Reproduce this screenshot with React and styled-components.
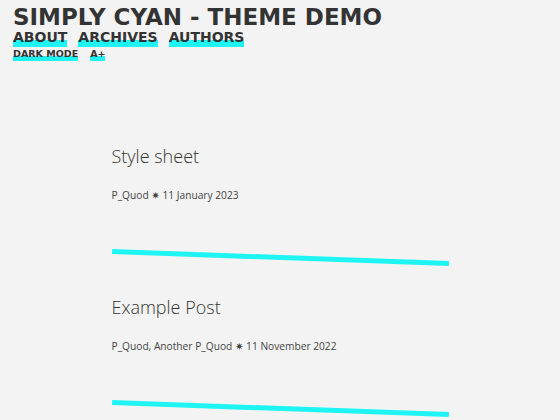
import React from 'react'
import styled, { createGlobalStyle } from 'styled-components'

const GlobalStyle = createGlobalStyle`
  html, body {
    margin: 0;
    padding: 0;
    background: #f3f3f3;
    color: #333333;
    font-family: "DejaVu Sans", "Noto Sans", sans-serif;
  }
`

const cyan = '#1ef4f4'

const Header = styled.header`
  padding: 6px 13px 0;
  display: flex;
  flex-direction: column;
  align-items: flex-start;
`

const Title = styled.h1`
  margin: 0;
  font-size: 23px;
  line-height: 23px;
  font-weight: 700;
  color: #333;
`

const Nav = styled.nav`
  display: flex;
  align-items: flex-start;
  gap: ${p => p.$gap}px;
  margin-top: ${p => p.$top}px;
`

const NavLink = styled.a`
  display: inline-block;
  font-size: ${p => p.$size}px;
  line-height: ${p => p.$line}px;
  padding-bottom: 2px;
  font-weight: 700;
  color: #333;
  text-decoration: none;
  background: linear-gradient(to bottom, transparent 60%, ${cyan} 60%);
  cursor: pointer;
`

const Main = styled.main`
  width: 337px;
  margin: 0 auto;
  padding-top: 84px;
  font-family: "Open Sans", "DejaVu Sans", sans-serif;
`

const Post = styled.article`
  display: flex;
  flex-direction: column;
`

const PostTitle = styled.h2`
  margin: 0;
  font-size: 18px;
  line-height: 22px;
  font-weight: 300;
  color: #333;
`

const Meta = styled.p`
  margin: 21px 0 0;
  font-size: 10.2px;
  line-height: 14px;
  color: #444;
`

const Rule = styled.hr`
  border: none;
  height: 5px;
  background: ${cyan};
  margin: 53px 0 36px;
  transform: rotate(2deg);
`

const posts = [
  { title: 'Style sheet', authors: 'P_Quod', date: '11 January 2023' },
  { title: 'Example Post', authors: 'P_Quod, Another P_Quod', date: '11 November 2022' },
]

export default function App() {
  return (
    <>
      <GlobalStyle />
      <Header>
        <Title>SIMPLY CYAN - THEME DEMO</Title>
        <Nav $gap={11} $top={0}>
          <NavLink $size={14} $line={16}>ABOUT</NavLink>
          <NavLink $size={14} $line={16}>ARCHIVES</NavLink>
          <NavLink $size={14} $line={16}>AUTHORS</NavLink>
        </Nav>
        <Nav $gap={12} $top={1}>
          <NavLink $size={9.5} $line={11}>DARK MODE</NavLink>
          <NavLink $size={9.5} $line={11}>A+</NavLink>
        </Nav>
      </Header>
      <Main>
        {posts.map(post => (
          <Post key={post.title}>
            <PostTitle>{post.title}</PostTitle>
            <Meta>{post.authors} ✷ {post.date}</Meta>
            <Rule />
          </Post>
        ))}
      </Main>
    </>
  )
}
